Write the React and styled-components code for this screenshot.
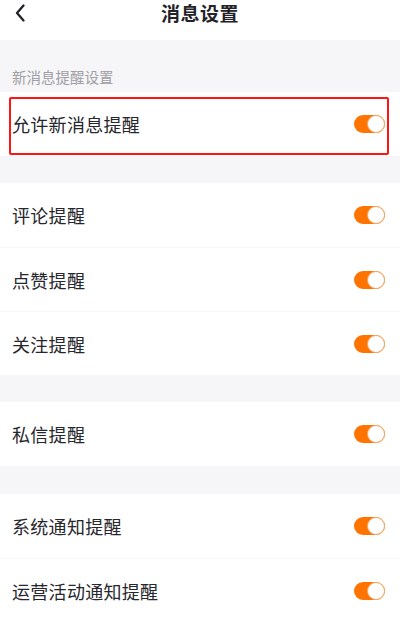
import React, { useState } from 'react';
import styled, { createGlobalStyle } from 'styled-components';

const GlobalStyle = createGlobalStyle`
  html, body {
    margin: 0;
    padding: 0;
    background: #f6f6f8;
  }
  body {
    font-family: "Noto Sans CJK SC", "Noto Sans", sans-serif;
  }
`;

const Page = styled.div`
  width: 400px;
  min-height: 621px;
  background: #f6f6f8;
  overflow: hidden;
`;

const Header = styled.div`
  height: 40px;
  background: #fff;
  display: flex;
  align-items: flex-start;
  justify-content: center;
  position: relative;
`;

const BackButton = styled.button`
  position: absolute;
  left: 10px;
  top: 2px;
  width: 20px;
  height: 22px;
  padding: 0;
  border: none;
  background: none;
  display: flex;
  align-items: center;
  justify-content: center;
`;

const Title = styled.h1`
  margin: 0;
  margin-top: -1px;
  font-size: 19px;
  line-height: 28px;
  font-weight: 600;
  color: #222228;
  letter-spacing: 0.5px;
`;

const SectionLabel = styled.div`
  height: 52px;
  box-sizing: border-box;
  padding: 24px 0 0 12px;
  font-size: 14.5px;
  line-height: 26px;
  color: #9e9ea4;
`;

const Group = styled.div`
  background: #fff;
  margin-bottom: ${(p) => p.gap || 0}px;
`;

const Row = styled.div`
  position: relative;
  height: 64px;
  display: flex;
  align-items: center;
  justify-content: space-between;
  padding: 0 15px 0 12px;

  & + & {
    border-top: 1px solid #f7f7f9;
    height: 63px;
  }

  ${(p) =>
    p.highlight &&
    `
    &::after {
      content: '';
      position: absolute;
      left: 9px;
      right: 11px;
      top: 5px;
      bottom: 1px;
      border: 2px solid #ff1414;
      border-radius: 2px;
      pointer-events: none;
    }
  `}
`;

const Label = styled.span`
  font-size: 18px;
  color: #26262c;
  letter-spacing: 0.3px;
`;

const Switch = styled.button`
  width: 31px;
  height: 18px;
  padding: 0;
  border: none;
  border-radius: 9px;
  background: ${(p) => (p.on ? '#ff7400' : '#e0e0e0')};
  position: relative;
  cursor: pointer;

  &::after {
    content: '';
    position: absolute;
    top: 0;
    left: ${(p) => (p.on ? '13px' : '0')};
    width: 18px;
    height: 18px;
    box-sizing: border-box;
    border-radius: 50%;
    background: #fff;
    border: 1px solid ${(p) => (p.on ? '#f3a865' : '#d6d6d6')};
  }
`;

const groups = [
  { gap: 27, items: ['评论提醒', '点赞提醒', '关注提醒'] },
  { gap: 28, items: ['私信提醒'] },
  { gap: 0, items: ['系统通知提醒', '运营活动通知提醒'] },
];

const SettingRow = ({ label, highlight }) => {
  const [on, setOn] = useState(true);
  return (
    <Row highlight={highlight}>
      <Label>{label}</Label>
      <Switch on={on} onClick={() => setOn(!on)} />
    </Row>
  );
};

const App = () => {
  return (
    <Page>
      <GlobalStyle />
      <Header>
        <BackButton>
          <svg width="12" height="18" viewBox="0 0 12 18" fill="none">
            <path d="M9.5 1.5 L3 9 L9.5 16.5" stroke="#222228" strokeWidth="2.3" strokeLinecap="round" strokeLinejoin="round" />
          </svg>
        </BackButton>
        <Title>消息设置</Title>
      </Header>

      <SectionLabel>新消息提醒设置</SectionLabel>
      <Group gap={27}>
        <SettingRow label="允许新消息提醒" highlight />
      </Group>

      {groups.map((g, i) => (
        <Group key={i} gap={g.gap}>
          {g.items.map((item) => (
            <SettingRow key={item} label={item} />
          ))}
        </Group>
      ))}
    </Page>
  );
};

export default App;
